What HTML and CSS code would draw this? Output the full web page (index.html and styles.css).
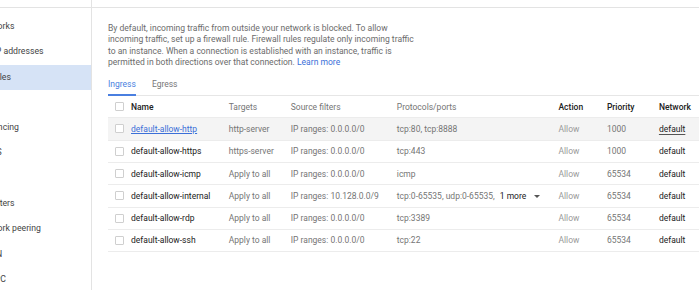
FILE: index.html
```html
<!DOCTYPE html>
<html>
<head>
<meta charset="utf-8">
<link rel="stylesheet" href="styles.css">
</head>
<body>
<div class="app">
  <nav class="sidebar">
    <div class="strip"></div>
    <ul class="menu">
      <li class="item">VPC networks</li>
      <li class="item">External IP addresses</li>
      <li class="item selected">Firewall rules</li>
      <li class="item">Routes</li>
      <li class="item">Load balancing</li>
      <li class="item">Cloud DNS</li>
      <li class="item">VPN</li>
      <li class="item">Cloud Routers</li>
      <li class="item">VPC network peering</li>
      <li class="item">Cloud CDN</li>
      <li class="item">Shared VPC</li>
    </ul>
  </nav>
  <main class="content">
    <div class="strip"></div>
    <div class="panel">
      <p class="intro">By default, incoming traffic from outside your network is blocked. To allow<br>incoming traffic, set up a firewall rule. Firewall rules regulate only incoming traffic<br>to an instance. When a connection is established with an instance, traffic is<br>permitted in both directions over that connection. <a class="link" href="#">Learn more</a></p>
      <div class="tabs">
        <span class="tab active">Ingress</span>
        <span class="tab">Egress</span>
      </div>
      <table class="rules">
        <colgroup>
          <col class="c-check"><col class="c-name"><col class="c-targets"><col class="c-source"><col class="c-proto"><col class="c-action"><col class="c-prio"><col class="c-net">
        </colgroup>
        <thead>
          <tr>
            <th><span class="box"></span></th>
            <th class="strong">Name</th>
            <th>Targets</th>
            <th>Source filters</th>
            <th>Protocols/ports</th>
            <th class="strong">Action</th>
            <th class="strong">Priority</th>
            <th class="strong">Network</th>
          </tr>
        </thead>
        <tbody>
          <tr class="hover">
            <td><span class="box"></span></td>
            <td class="name"><a class="link under" href="#">default-allow-http</a></td>
            <td>http-server</td>
            <td>IP ranges: 0.0.0.0/0</td>
            <td>tcp:80, tcp:8888</td>
            <td class="action">Allow</td>
            <td>1000</td>
            <td class="net"><span class="netlink">default</span></td>
          </tr>
          <tr>
            <td><span class="box"></span></td>
            <td class="name">default-allow-https</td>
            <td>https-server</td>
            <td>IP ranges: 0.0.0.0/0</td>
            <td>tcp:443</td>
            <td class="action">Allow</td>
            <td>1000</td>
            <td class="net">default</td>
          </tr>
          <tr>
            <td><span class="box"></span></td>
            <td class="name">default-allow-icmp</td>
            <td>Apply to all</td>
            <td>IP ranges: 0.0.0.0/0</td>
            <td>icmp</td>
            <td class="action">Allow</td>
            <td>65534</td>
            <td class="net">default</td>
          </tr>
          <tr>
            <td><span class="box"></span></td>
            <td class="name">default-allow-internal</td>
            <td>Apply to all</td>
            <td>IP ranges: 10.128.0.0/9</td>
            <td>tcp:0-65535, udp:0-65535, <span class="more">1 more <span class="caret"></span></span></td>
            <td class="action">Allow</td>
            <td>65534</td>
            <td class="net">default</td>
          </tr>
          <tr>
            <td><span class="box"></span></td>
            <td class="name">default-allow-rdp</td>
            <td>Apply to all</td>
            <td>IP ranges: 0.0.0.0/0</td>
            <td>tcp:3389</td>
            <td class="action">Allow</td>
            <td>65534</td>
            <td class="net">default</td>
          </tr>
          <tr>
            <td><span class="box"></span></td>
            <td class="name">default-allow-ssh</td>
            <td>Apply to all</td>
            <td>IP ranges: 0.0.0.0/0</td>
            <td>tcp:22</td>
            <td class="action">Allow</td>
            <td>65534</td>
            <td class="net">default</td>
          </tr>
        </tbody>
      </table>
    </div>
  </main>
</div>
</body>
</html>
```

FILE: styles.css
```css
html, body {
  margin: 0;
  padding: 0;
  background: #fff;
}
body {
  font-family: Roboto, "Liberation Sans", Arial, sans-serif;
  font-size: 8.5px;
  color: #212121;
  width: 699px;
  height: 290px;
  overflow: hidden;
}
.app {
  display: flex;
  height: 290px;
}
.strip {
  height: 7px;
  border-bottom: 1px solid #e3e3e3;
}
.sidebar {
  width: 91px;
  flex: none;
  border-right: 1px solid #e3e3e3;
  overflow: hidden;
}
.menu {
  list-style: none;
  margin: 0;
  padding: 6px 0 0;
}
.item {
  height: 25.3px;
  line-height: 25.3px;
  font-size: 8.7px;
  color: #444;
  white-space: nowrap;
  overflow: hidden;
  text-indent: -40px;
}
.item.selected {
  background: #d6e3f6;
}
.content {
  flex: 1;
  min-width: 0;
  overflow: hidden;
}
.panel {
  padding: 15px 0 0 16px;
}
.intro {
  margin: 0;
  font-size: 8.55px;
  line-height: 11.4px;
  white-space: nowrap;
  color: #6b6b6b;
}
.link {
  color: #3b6fd8;
  text-decoration: none;
}
.link.under {
  text-decoration: underline;
  text-underline-offset: 1px;
}
.tabs {
  display: flex;
  gap: 16px;
  margin-top: 10px;
  border-bottom: 1px solid #e6e6e6;
}
.tab {
  line-height: 11.4px;
  padding-bottom: 4px;
  color: #777;
  border-bottom: 2px solid transparent;
  margin-bottom: -1px;
}
.tab.active {
  color: #4a7fe0;
  border-bottom-color: #4a7fe0;
}
.rules {
  border-collapse: collapse;
  table-layout: fixed;
  width: 640px;
}
.c-check { width: 23px; }
.c-name { width: 97.7px; }
.c-targets { width: 62px; }
.c-source { width: 106px; }
.c-proto { width: 161.6px; }
.c-action { width: 48.4px; }
.c-prio { width: 52px; }
.c-net { width: 89px; }
.rules th, .rules td {
  height: 21.3px;
  padding: 0;
  text-align: left;
  white-space: nowrap;
  border-bottom: 1px solid #ececec;
  color: #757575;
  font-weight: 400;
  vertical-align: middle;
}
.rules th.strong {
  color: #212121;
  font-weight: 500;
}
.rules td.name, .rules td.net {
  color: #212121;
}
.rules td.action {
  color: #999;
}
.rules tr.hover td {
  background: #f4f4f4;
}
.box {
  display: block;
  width: 7px;
  height: 7px;
  margin-left: 7px;
  border: 1px solid #cfcfcf;
  border-radius: 1px;
  background: #fff;
}
.netlink {
  text-decoration: underline;
  text-decoration-color: #555;
  text-underline-offset: 2px;
}
.more {
  color: #212121;
  margin-left: 3px;
}
.caret {
  display: inline-block;
  width: 0;
  height: 0;
  margin-left: 6px;
  vertical-align: 1px;
  border-left: 3px solid transparent;
  border-right: 3px solid transparent;
  border-top: 3px solid #555;
}
```
